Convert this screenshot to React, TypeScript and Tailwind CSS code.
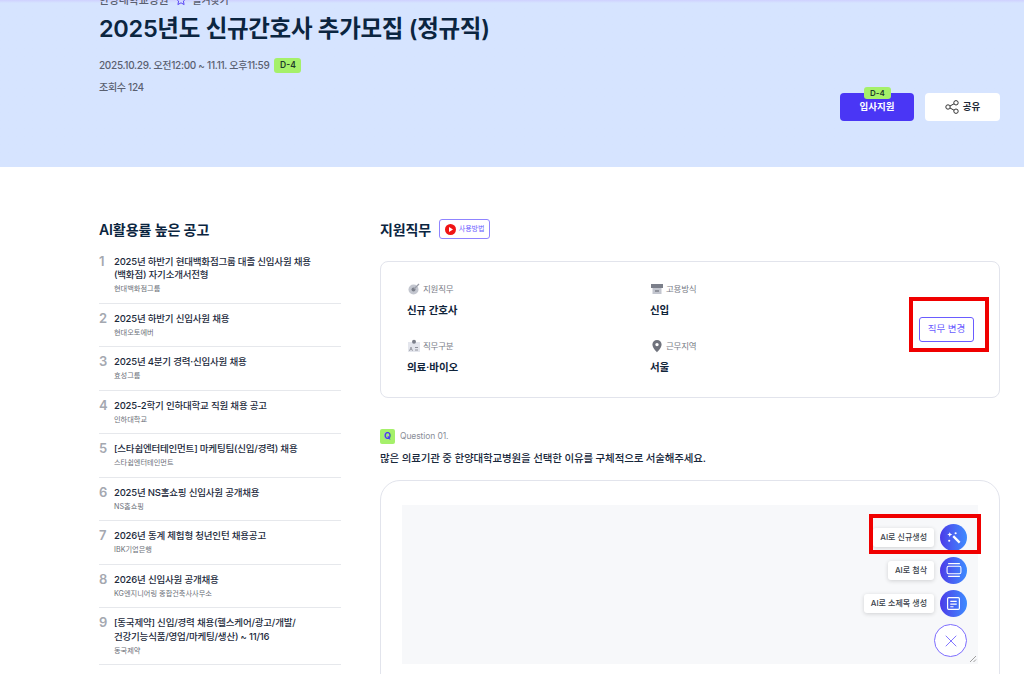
import React from "react";
import { X } from "lucide-react";

const jobs = [
  { no: 1, title: ["2025년 하반기 현대백화점그룹 대졸 신입사원 채용", "(백화점) 자기소개서전형"], company: "현대백화점그룹" },
  { no: 2, title: ["2025년 하반기 신입사원 채용"], company: "현대오토에버" },
  { no: 3, title: ["2025년 4분기 경력·신입사원 채용"], company: "효성그룹" },
  { no: 4, title: ["2025-2학기 인하대학교 직원 채용 공고"], company: "인하대학교" },
  { no: 5, title: ["[스타쉽엔터테인먼트] 마케팅팀(신입/경력) 채용"], company: "스타쉽엔터테인먼트" },
  { no: 6, title: ["2025년 NS홈쇼핑 신입사원 공개채용"], company: "NS홈쇼핑" },
  { no: 7, title: ["2026년 동계 체험형 청년인턴 채용공고"], company: "IBK기업은행" },
  { no: 8, title: ["2026년 신입사원 공개채용"], company: "KG엔지니어링 종합건축사사무소" },
  { no: 9, title: ["[동국제약] 신입/경력 채용(헬스케어/광고/개발/", "건강기능식품/영업/마케팅/생산) ~ 11/16"], company: "동국제약" },
];

const Target = () => (
  <svg width="14" height="14" viewBox="0 0 14 14" fill="none">
    <circle cx="6.5" cy="7.5" r="5" fill="#c3c6cf" />
    <circle cx="6.5" cy="7.5" r="2" fill="#7b7f8a" />
    <path d="M7 7l5-5" stroke="#9a9da8" strokeWidth="1.3" />
  </svg>
);

const Calendar = () => (
  <svg width="14" height="14" viewBox="0 0 14 14">
    <rect x="1" y="2" width="12" height="4" fill="#7b7f8a" />
    <rect x="2.5" y="6" width="9" height="6" fill="#c3c6cf" />
    <rect x="5" y="8" width="4" height="2" fill="#8f929c" />
  </svg>
);

const Person = () => (
  <svg width="14" height="14" viewBox="0 0 14 14">
    <rect x="1" y="3" width="12" height="10" fill="#e4e6ed" />
    <circle cx="7" cy="2.8" r="2" fill="#7b7f8a" />
    <path d="M2.500 12l1.500-4 1.500 4M3.200 10.500h1.600" fill="none" stroke="#8f929c" strokeWidth="0.8" />
    <rect x="8" y="8" width="3" height="1" fill="#8f929c" />
    <rect x="8" y="10.5" width="3" height="1" fill="#8f929c" />
  </svg>
);

const Pin = () => (
  <svg width="14" height="14" viewBox="0 0 14 14">
    <path fillRule="evenodd" fill="#6f727c" d="M7 1a4.6 4.6 0 0 0-4.6 4.6C2.400 9 7 13.400 7 13.400S11.600 9 11.600 5.600A4.600 4.600 0 0 0 7 1Zm0 6.300a1.700 1.700 0 1 1 0-3.400 1.700 1.700 0 0 1 0 3.400Z" />
  </svg>
);

const Share = () => (
  <svg width="14" height="14" viewBox="0 0 14 14" fill="none" stroke="#333" strokeWidth="1">
    <circle cx="3" cy="7" r="2.200" />
    <circle cx="11" cy="2.800" r="2.200" />
    <circle cx="11" cy="11.200" r="2.200" />
    <path d="M5 6l4-2.200M5 8l4 2.200" />
  </svg>
);

const Field = ({ icon, label, value }: { icon: React.ReactNode; label: string; value: string }) => (
  <div>
    <div className="flex items-center gap-[2px] h-[14px] text-[8.500px] tracking-[-0.2px] text-[#777b85]">
      {icon}
      <span>{label}</span>
    </div>
    <div className="mt-[6px] text-[10.500px] leading-[18px] font-semibold tracking-[-0.1px] text-[#10243a]">{value}</div>
  </div>
);

const FabRow = ({ label, children }: { label: string; children: React.ReactNode }) => (
  <div className="flex items-center justify-end gap-[6px] h-[28px]">
    <span className="h-[19px] px-[7px] flex items-center rounded-[3px] bg-white text-[8px] font-medium text-[#3a3f4a] shadow-[0_1px_4px_rgba(0,0,0,0.16)]">
      {label}
    </span>
    <span className="w-[27px] h-[27px] rounded-full bg-gradient-to-r from-[#4b38e8] to-[#3d8bff] flex items-center justify-center">
      {children}
    </span>
  </div>
);

export default function App() {
  return (
    <div className="relative h-[674px] overflow-hidden bg-white font-['Inter','Noto_Sans_CJK_KR',sans-serif]">
      {/* Top band */}
      <header className="h-[167px] overflow-hidden bg-gradient-to-b from-[#cfd0ff] via-[#d6e4ff] via-[3px] to-[#d6e4ff] pl-[99px] pr-[24px] pt-[2px]">
        <div className="flex items-center -mt-[10px] h-[16px] text-[11px] font-medium tracking-[-0.2px] text-[#5a6070]">
          <span>한양대학교병원</span>
          <svg className="ml-[7px]" width="12" height="12" viewBox="0 0 12 12" fill="none" stroke="#5a46f5" strokeWidth="1">
            <path d="M6 1l1.500 3.300 3.500.4-2.600 2.400.7 3.500L6 8.800l-3.100 1.800.7-3.500L1 4.700l3.500-.4z" />
          </svg>
          <span className="ml-[5px] text-[10px]">즐겨찾기</span>
        </div>
        <h1 className="mt-[3px] text-[23.500px] leading-[36px] font-semibold tracking-[-0.3px] text-[#0b2540]">
          2025년도 신규간호사 추가모집 (정규직)
        </h1>
        <div className="mt-[10px] flex items-center gap-[5px] h-[16px]">
          <span className="text-[10px] font-medium tracking-[-0.3px] text-[#5a6070]">2025.10.29. 오전12:00 ~ 11.11. 오후11:59</span>
          <span className="w-[27px] h-[15px] rounded-[3px] bg-[#a5f06a] text-[8.500px] font-semibold text-[#1e3a2a] flex items-center justify-center">D-4</span>
        </div>
        <div className="mt-[6px] text-[10px] leading-[16px] font-medium tracking-[-0.3px] text-[#5a6070]">조회수 124</div>
        <div className="-mt-[2px] flex justify-end gap-[11px]">
          <button className="relative w-[74px] h-[28px] rounded-[4px] bg-[#4a36f5] text-[9.500px] font-semibold text-white">
            입사지원
            <span className="absolute left-[24px] -top-[6px] w-[27px] h-[12px] rounded-[3px] bg-[#a5f06a] text-[8px] leading-[12px] font-semibold text-[#1e3a2a]">D-4</span>
          </button>
          <button className="w-[75px] h-[28px] rounded-[4px] bg-white text-[9.500px] font-semibold text-[#1f2937] flex items-center justify-center gap-[4px]">
            <Share />
            공유
          </button>
        </div>
      </header>

      <main className="flex pl-[99px] pr-[24px] pt-[52px] gap-[39px]">
        {/* Side list */}
        <aside className="w-[242px] shrink-0">
          <h2 className="mt-[1px] text-[14px] leading-[20px] font-semibold tracking-[-0.1px] text-[#0b2540]">AI활용률 높은 공고</h2>
          <ul className="mt-[6.500px]">
            {jobs.map((job) => (
              <li key={job.no} className="flex border-b border-[#e6e8ec] pt-[8px] pb-[8.500px]">
                <span className="w-[15px] shrink-0 text-[13px] leading-[13px] font-semibold text-[#a4a8b0]">{job.no}</span>
                <div className="min-w-0">
                  {job.title.map((line) => (
                    <div key={line} className="text-[9.500px] leading-[13.500px] font-medium tracking-[-0.2px] whitespace-nowrap text-[#1c2a3c]">{line}</div>
                  ))}
                  <div className="mt-[1.500px] text-[7.200px] leading-[11px] text-[#6b6f78]">{job.company}</div>
                </div>
              </li>
            ))}
          </ul>
        </aside>

        {/* Application form */}
        <section className="w-[620px] shrink-0">
          <div className="flex items-center gap-[8px] h-[20px]">
            <h2 className="text-[14px] font-semibold tracking-[-0.1px] text-[#0b2540]">지원직무</h2>
            <span className="h-[20px] w-[51px] rounded-[3px] border border-[#8f84ff] flex items-center justify-center gap-[3px] text-[7px] text-[#6a5cff]">
              <svg width="11" height="11" viewBox="0 0 11 11">
                <circle cx="5.500" cy="5.500" r="5.500" fill="#f01414" />
                <path d="M4 3l4 2.500L4 8z" fill="#fff" />
              </svg>
              사용방법
            </span>
          </div>

          <div className="mt-[22px] h-[137px] rounded-[8px] border border-[#e2e4ec] flex pl-[26px] pr-[25px] pt-[20px]">
            <div className="grid grid-cols-[243px_200px] gap-y-[19px] h-fit">
              <Field icon={<Target />} label="지원직무" value="신규 간호사" />
              <Field icon={<Calendar />} label="고용방식" value="신입" />
              <Field icon={<Person />} label="직무구분" value="의료·바이오" />
              <Field icon={<Pin />} label="근무지역" value="서울" />
            </div>
            <button className="ml-auto mt-[35px] w-[55px] h-[25px] rounded-[3px] border border-[#6a5cff] text-[9.500px] text-[#6a5cff]">
              직무 변경
            </button>
          </div>

          <div className="mt-[30px] flex items-center gap-[5px] h-[16px]">
            <span className="w-[15px] h-[15px] rounded-[2px] bg-[#a5f06a] text-[9px] font-bold text-[#4a36f5] flex items-center justify-center">Q</span>
            <span className="text-[8.500px] tracking-[-0.1px] text-[#8a8e98]">Question 01.</span>
          </div>
          <p className="mt-[7px] text-[10.500px] leading-[16px] font-medium tracking-[-0.15px] text-[#16263a]">
            많은 의료기관 중 한양대학교병원을 선택한 이유를 구체적으로 서술해주세요.
          </p>

          <div className="mt-[13px] h-[300px] rounded-[20px] border border-[#e2e4ec] px-[21px] pt-[24px]">
            <div className="relative h-[159px] bg-[#f7f8fa]">
              <div className="absolute right-[11px] top-[18px] flex flex-col gap-[5px]">
                <FabRow label="AI로 신규생성">
                  <svg width="15" height="15" viewBox="0 0 14 14" fill="#fff">
                    <path d="M6 6.500l1.500-1.500 6 6-1.500 1.500z" />
                    <path d="M3.500 2l.7 1.600 1.600.7-1.600.7-.7 1.600-.7-1.600L1.200 4.300l1.600-.7z" />
                    <circle cx="9" cy="3" r="1" />
                    <circle cx="3" cy="10" r="1" />
                  </svg>
                </FabRow>
                <FabRow label="AI로 첨삭">
                  <svg width="16" height="16" viewBox="0 0 15 15" fill="none" stroke="#fff" strokeWidth="1">
                    <rect x="1" y="4" width="13" height="7" rx="1.500" />
                    <path d="M2 1.500h11M2 13.500h11" />
                  </svg>
                </FabRow>
                <FabRow label="AI로 소제목 생성">
                  <svg width="15" height="15" viewBox="0 0 14 14" fill="none" stroke="#fff" strokeWidth="1.100">
                    <rect x="1.500" y="1.500" width="11" height="11" rx="1" />
                    <path d="M4 5h6M4 7.500h6M4 10h3" />
                  </svg>
                </FabRow>
                <div className="flex justify-end mt-[2px]">
                  <span className="w-[33px] h-[33px] rounded-full bg-white border border-[#7d6dff] flex items-center justify-center text-[#6a5cff]">
                    <X size={20} strokeWidth={1} />
                  </span>
                </div>
              </div>
              <svg className="absolute right-[1px] bottom-[1px]" width="8" height="8" viewBox="0 0 8 8" stroke="#888" strokeWidth="0.800">
                <path d="M1 7l6-6M4.500 7l2.500-2.500" />
              </svg>
            </div>
          </div>
        </section>
      </main>

      {/* Red annotation boxes over the capture */}
      <div className="absolute left-[909px] top-[297px] w-[80px] h-[55px] border-[4px] border-[#f00000]" />
      <div className="absolute left-[869px] top-[514px] w-[112px] h-[40px] border-[4px] border-[#f00000]" />
    </div>
  );
}
